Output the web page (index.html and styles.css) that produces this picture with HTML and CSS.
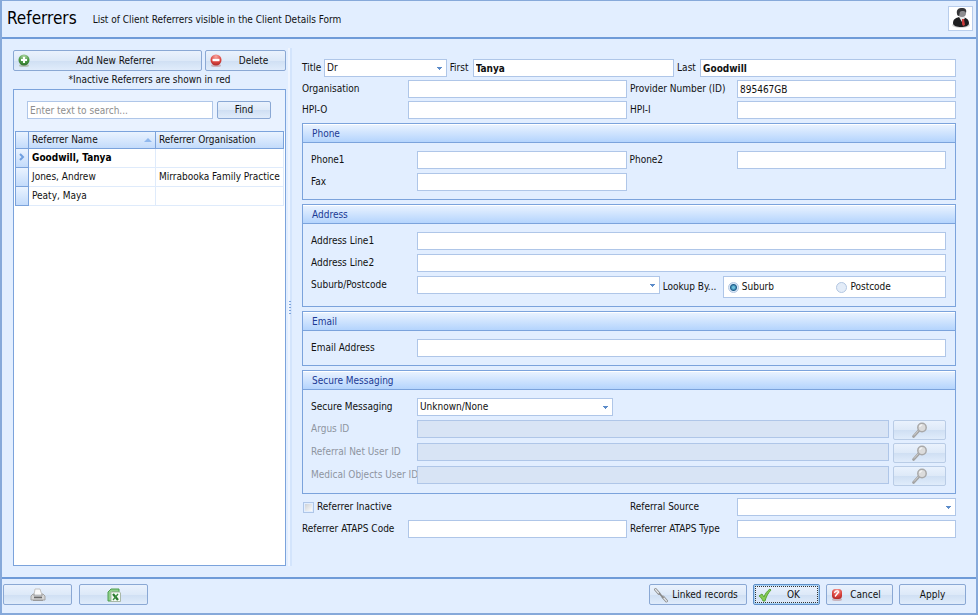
FILE: index.html
```html
<!DOCTYPE html>
<html lang="en">
<head>
    <meta charset="UTF-8">
    <meta name="viewport" content="width=device-width, initial-scale=1.0">
    <title>Referrers</title>
    <link rel="stylesheet" href="styles.css">
</head>
<body>
    <svg class="sprite" aria-hidden="true">
        <defs>
            <radialGradient id="greenBall" cx="50%" cy="20%" r="80%">
                <stop offset="0" stop-color="#b4d8a8"/>
                <stop offset="0.6" stop-color="#4c9a45"/>
                <stop offset="1" stop-color="#2f6f2c"/>
            </radialGradient>
            <radialGradient id="redBall" cx="50%" cy="20%" r="80%">
                <stop offset="0" stop-color="#f7a8a2"/>
                <stop offset="0.6" stop-color="#dd4640"/>
                <stop offset="1" stop-color="#b02a28"/>
            </radialGradient>
        </defs>
        <symbol id="magnifier" viewBox="0 0 16 16">
            <path d="M1.500 14.500L7 8.500" stroke="#a3a3a3" stroke-width="2.600" stroke-linecap="round"/>
            <path d="M2 13.500L7 8" stroke="#cfcfcf" stroke-width="1"/>
            <circle cx="10" cy="5.500" r="4.200" fill="#dcdcdc" stroke="#a9a9a9" stroke-width="1.500"/>
            <path d="M7.800 5a2.400 2.400 0 0 1 2.400-2.200" fill="none" stroke="#f4f4f4" stroke-width="1.200"/>
        </symbol>
    </svg>

    <header class="header">
        <h1>Referrers</h1>
        <p>List of Client Referrers visible in the Client Details Form</p>
        <div class="avatar">
            <svg width="20" height="22" viewBox="0 0 20 22">
                <ellipse cx="10" cy="18" rx="9" ry="3" fill="#d5d5d5"/>
                <path d="M2 16c0-4 3-5 6-6l4 0c4 1 6 3 6 6 0 3-4 4-8 4s-8-1-8-4z" fill="#1d1d1f"/>
                <path d="M8 10l3 5 3-4-1-2H8z" fill="#e9e9e9"/>
                <path d="M11 12l2 0 1 6-2 1-1-2z" fill="#c93a3a"/>
                <circle cx="11" cy="6" r="4" fill="#8d8d90"/>
                <path d="M6 7c-1-5 2-6 5-6 3 0 5 1 4 5-1-2-2-2-4-2-3 0-2 3-3 5-1 0-2-1-2-2z" fill="#353538"/>
            </svg>
        </div>
    </header>

    <main class="main-content">
        <section class="list-panel">
            <div class="list-buttons">
                <button type="button" class="btn btn-add">
                    <svg width="12" height="13" viewBox="0 0 12 13">
                        <ellipse cx="6" cy="11.500" rx="5" ry="1.500" fill="#b4c2b8"/>
                        <circle cx="6" cy="6" r="5.500" fill="url(#greenBall)"/>
                        <path d="M6 3v6M3 6h6" stroke="#fff" stroke-width="2"/>
                    </svg>
                    <span>Add New Referrer</span>
                </button>
                <button type="button" class="btn btn-delete">
                    <svg width="12" height="13" viewBox="0 0 12 13">
                        <ellipse cx="6" cy="11.500" rx="5" ry="1.500" fill="#c9b4bd"/>
                        <circle cx="6" cy="6" r="5.500" fill="url(#redBall)"/>
                        <path d="M2.500 6h7" stroke="#fff" stroke-width="2.400"/>
                    </svg>
                    <span>Delete</span>
                </button>
            </div>
            <p class="note">*Inactive Referrers are shown in red</p>

            <div class="grid-panel">
                <div class="search">
                    <input type="text" placeholder="Enter text to search..." aria-label="Search">
                    <button type="button" class="btn btn-find">Find</button>
                </div>
                <table>
                    <thead>
                        <tr>
                            <th class="marker"></th>
                            <th class="name">Referrer Name <svg width="8" height="4" viewBox="0 0 8 4"><path d="M0 4L4 0l4 4z" fill="#8fb8ee"/></svg></th>
                            <th>Referrer Organisation</th>
                        </tr>
                    </thead>
                    <tbody>
                        <tr class="selected">
                            <td class="marker"><svg width="6" height="8" viewBox="0 0 6 8"><path d="M1 1l3 3-3 3" fill="none" stroke="#6f9fe0" stroke-width="2"/></svg></td>
                            <td>Goodwill, Tanya</td>
                            <td></td>
                        </tr>
                        <tr>
                            <td class="marker"></td>
                            <td>Jones, Andrew</td>
                            <td>Mirrabooka Family Practice</td>
                        </tr>
                        <tr>
                            <td class="marker"></td>
                            <td>Peaty, Maya</td>
                            <td></td>
                        </tr>
                    </tbody>
                </table>
            </div>
        </section>

        <div class="splitter">
            <i></i><i></i><i></i><i></i><i></i>
        </div>

        <form class="details" id="detailsForm">
            <div class="person">
                <div class="name-row">
                    <label for="title">Title</label>
                    <select id="title" class="w-title"><option>Dr</option></select>
                    <label for="first">First</label>
                    <input type="text" id="first" class="w-first" value="Tanya">
                    <label for="last">Last</label>
                    <input type="text" id="last" class="w-last" value="Goodwill">
                </div>
                <div class="fields">
                    <label for="organisation">Organisation</label>
                    <input type="text" id="organisation">
                    <label for="provider" class="second">Provider Number (ID)</label>
                    <input type="text" id="provider" value="895467GB">
                    <label for="hpio">HPI-O</label>
                    <input type="text" id="hpio">
                    <label for="hpii" class="second">HPI-I</label>
                    <input type="text" id="hpii">
                </div>
            </div>

            <section class="group">
                <h2>Phone</h2>
                <div class="group-body fields">
                    <label for="phone1">Phone1</label>
                    <input type="text" id="phone1">
                    <label for="phone2" class="second">Phone2</label>
                    <input type="text" id="phone2">
                    <label for="fax">Fax</label>
                    <input type="text" id="fax">
                </div>
            </section>

            <section class="group">
                <h2>Address</h2>
                <div class="group-body fields">
                    <label for="line1">Address Line1</label>
                    <input type="text" id="line1" class="wide">
                    <label for="line2">Address Line2</label>
                    <input type="text" id="line2" class="wide">
                    <label for="suburb">Suburb/Postcode</label>
                    <div class="wide lookup">
                        <select id="suburb"><option></option></select>
                        <span id="lookupLabel">Lookup By...</span>
                        <div class="radios" role="radiogroup" aria-labelledby="lookupLabel">
                            <label><input type="radio" name="lookup" checked>Suburb</label>
                            <label><input type="radio" name="lookup">Postcode</label>
                        </div>
                    </div>
                </div>
            </section>

            <section class="group">
                <h2>Email</h2>
                <div class="group-body fields">
                    <label for="email">Email Address</label>
                    <input type="text" id="email" class="wide">
                </div>
            </section>

            <section class="group">
                <h2>Secure Messaging</h2>
                <div class="group-body fields">
                    <label for="secure">Secure Messaging</label>
                    <select id="secure" class="wide w-secure"><option>Unknown/None</option></select>
                    <label for="argus" class="off">Argus ID</label>
                    <div class="wide id-row">
                        <input type="text" id="argus" disabled>
                        <button type="button" class="btn" disabled aria-label="Find Argus ID"><svg width="16" height="16"><use href="#magnifier"/></svg></button>
                    </div>
                    <label for="refnet" class="off">Referral Net User ID</label>
                    <div class="wide id-row">
                        <input type="text" id="refnet" disabled>
                        <button type="button" class="btn" disabled aria-label="Find Referral Net User ID"><svg width="16" height="16"><use href="#magnifier"/></svg></button>
                    </div>
                    <label for="medobj" class="off">Medical Objects User ID</label>
                    <div class="wide id-row">
                        <input type="text" id="medobj" disabled>
                        <button type="button" class="btn" disabled aria-label="Find Medical Objects User ID"><svg width="16" height="16"><use href="#magnifier"/></svg></button>
                    </div>
                </div>
            </section>

            <div class="fields">
                <label class="check"><input type="checkbox">Referrer Inactive</label>
                <label for="source" class="second">Referral Source</label>
                <select id="source"><option></option></select>
                <label for="atapsCode">Referrer ATAPS Code</label>
                <input type="text" id="atapsCode">
                <label for="atapsType" class="second">Referrer ATAPS Type</label>
                <input type="text" id="atapsType">
            </div>
        </form>
    </main>

    <footer class="footer">
        <button type="button" class="btn btn-tool" aria-label="Print">
            <svg width="16" height="14" viewBox="0 0 16 14">
                <path d="M5 1h5l2 6H4z" fill="#fafafa" stroke="#c3c3c3"/>
                <path d="M1 8l2-2h1v2h8V6h1l2 2v4H1z" fill="#d6d6d6" stroke="#a3a3a3"/>
                <path d="M4 9.500h8" stroke="#6a6a6a" stroke-width="1.500"/>
                <path d="M3 12h10v1H3z" fill="#9a9a9a"/>
            </svg>
        </button>
        <button type="button" class="btn btn-tool" aria-label="Export to Excel">
            <svg width="14" height="14" viewBox="0 0 14 14">
                <path d="M1 13V4l3-3h8v3H5v9z" fill="#8fcf8a" stroke="#4f9e50"/>
                <path d="M4 4h8.500l1 1v8.500H4z" fill="#f6fbf5" stroke="#a9b8a8"/>
                <path d="M6 6l5 6" stroke="#2c7a30" stroke-width="2.200"/>
                <path d="M11 6l-5 6" stroke="#3b8d3f" stroke-width="1.300"/>
            </svg>
        </button>
        <div class="spacer"></div>
        <button type="button" class="btn btn-linked">
            <svg width="14" height="16" viewBox="0 0 14 16">
                <path d="M1.500 2.500l3.500 4M9 10l3.500 4" stroke="#8b8b8b" stroke-width="2.800" stroke-linecap="round"/>
                <path d="M1.500 2.500l3.500 4M9 10l3.500 4" stroke="#e3e7ec" stroke-width="1.200" stroke-linecap="round"/>
                <path d="M5 6l4.500 5" stroke="#8a8a8a" stroke-width="1.800"/>
            </svg>
            <span>Linked records</span>
        </button>
        <button type="submit" form="detailsForm" class="btn btn-ok">
            <svg width="14" height="14" viewBox="0 0 14 14">
                <path d="M1 8l3-2 2 3c1-3 3-6 6-8l1 1c-3 3-5 7-6 11H5C4 11 3 9 1 8z" fill="#86cc55" stroke="#5aa339"/>
            </svg>
            <span>OK</span>
        </button>
        <button type="button" class="btn btn-cancel">
            <svg width="12" height="13" viewBox="0 0 12 13">
                <ellipse cx="6" cy="11.500" rx="5" ry="1.500" fill="#c9b4bd"/>
                <rect x="1" y="1" width="10" height="10" rx="3.500" fill="url(#redBall)"/>
                <path d="M4 8.500l4-5M3.500 5a3 2.500 0 0 1 4-2" fill="none" stroke="#fff" stroke-width="1.300"/>
            </svg>
            <span>Cancel</span>
        </button>
        <button type="button" class="btn btn-apply">Apply</button>
    </footer>
</body>
</html>
```
FILE: styles.css
```css
* {
    box-sizing: border-box;
}
body {
    margin: 0;
    min-height: 100vh;
    display: flex;
    flex-direction: column;
    font-family: "DejaVu Sans Condensed", "DejaVu Sans", sans-serif;
    font-size: 10px;
    line-height: 14px;
    color: #111;
    background: #e2eeff;
    border: 2px solid #86a9da;
    border-top-width: 1px;
}
.sprite {
    position: absolute;
    width: 0;
    height: 0;
}
h1, h2, p {
    margin: 0;
    font-weight: normal;
}

/* header */
.header {
    position: relative;
    display: flex;
    align-items: center;
    gap: 16px;
    height: 38px;
    padding: 0 3px 2px 5px;
    border-bottom: 2px solid #6f9bd8;
}
/* active tab edge over the window border */
.header::before {
    content: "";
    position: absolute;
    top: -1px;
    left: 111px;
    width: 102px;
    height: 1px;
    background: #e2eeff;
}
.header h1 {
    font-size: 17px;
    line-height: 20px;
    color: #000;
}
.header p {
    padding-top: 4px;
}
.avatar {
    display: flex;
    align-items: center;
    justify-content: center;
    width: 25px;
    height: 25px;
    margin-left: auto;
    background: #fff;
    border: 1px solid #b8cdec;
}

/* buttons */
.btn {
    display: flex;
    align-items: center;
    justify-content: center;
    height: 21px;
    padding: 0 4px;
    font: inherit;
    color: inherit;
    white-space: nowrap;
    background: linear-gradient(#eaf2fd, #dde9f8 50%, #cfdff3 51%, #e0ecfb);
    border: 1px solid #8aa8d4;
    border-radius: 2px;
}
.btn span {
    flex: 1;
    text-align: center;
}
.btn svg {
    flex: none;
}
.btn:disabled {
    border-color: #b9cce6;
}

/* inputs */
input[type="text"], select {
    width: 100%;
    min-width: 0;
    height: 18px;
    margin: 0;
    padding: 0 2px;
    font: inherit;
    color: inherit;
    background: #fff;
    border: 1px solid #afc6e8;
    border-radius: 0;
}
select {
    appearance: none;
    background-image: linear-gradient(#5b8bc9, #5b8bc9), linear-gradient(#5b8bc9, #5b8bc9), linear-gradient(#5b8bc9, #5b8bc9);
    background-repeat: no-repeat;
    background-position: right 4px top 7px, right 5px top 8px, right 6px top 9px;
    background-size: 5px 1px, 3px 1px, 1px 1px;
}
input[type="text"]:disabled {
    background: #d8e4f5;
}
input::placeholder {
    color: #8e8e8e;
    opacity: 1;
}

.main-content {
    flex: 1;
    display: flex;
    padding: 11px 20px 11px 11px;
}

/* list of referrers */
.list-panel {
    display: flex;
    flex-direction: column;
    width: 273px;
}
.list-buttons {
    display: flex;
    gap: 3px;
}
.btn-add {
    flex: 1;
}
.btn-delete {
    width: 81px;
}
.btn-add span, .btn-delete span {
    padding-left: 4px;
}
.note {
    padding: 2px 0;
    text-align: center;
}
.grid-panel {
    flex: 1;
    padding: 11px 1px 0;
    background: linear-gradient(#e9f2ff, #e9f2ff) no-repeat top / 100% 42px #fff;
    border: 1px solid #7ba3dc;
}
.search {
    display: flex;
    gap: 4px;
    margin: 0 13px 12px 12px;
}
.btn-find {
    width: 54px;
    height: 18px;
    flex: none;
}
table {
    width: 100%;
    table-layout: fixed;
    border-collapse: separate;
    border-spacing: 0;
}
th, td {
    height: 19px;
    padding: 0 3px;
    text-align: left;
    font-weight: normal;
    white-space: nowrap;
    border-right: 1px solid #dfebfb;
    border-bottom: 1px solid #dfebfb;
}
th {
    height: 18px;
    background: linear-gradient(#eaf3ff, #c3dbfb);
    border-right-color: #7ba3dc;
    border-bottom-color: #7ba3dc;
    border-top: 1px solid #7ba3dc;
}
th.name {
    width: 127px;
}
th svg {
    float: right;
    margin-top: 5px;
}
.marker {
    width: 14px;
    padding: 0;
    text-align: center;
    border-left: 1px solid #7ba3dc;
}
td.marker {
    background: linear-gradient(#eaf3ff, #c3dbfb);
    border-right-color: #7ba3dc;
    border-bottom-color: #7ba3dc;
}
.selected td {
    font-weight: bold;
    color: #000;
}

/* splitter */
.splitter {
    display: flex;
    flex-direction: column;
    align-items: center;
    justify-content: center;
    gap: 2px;
    width: 4px;
    margin: -2px 10px 0 2px;
    background: linear-gradient(90deg, #eff5ff 50%, #d3e4fc 50%);
}
.splitter i {
    width: 2px;
    height: 1px;
    background: #7ba3dc;
}

/* details form */
.details {
    flex: 1;
    display: flex;
    flex-direction: column;
    gap: 4px;
    margin-top: 9px;
}
.person {
    display: flex;
    flex-direction: column;
    gap: 3px;
}
.name-row {
    display: flex;
    align-items: center;
}
.name-row label {
    flex: none;
    width: 26px;
    padding-left: 3px;
}
.name-row label:first-child {
    width: 22px;
    padding-left: 0;
}
.name-row .w-title {
    flex: 120 1 0;
}
.name-row .w-first {
    flex: 201 1 0;
    font-weight: bold;
}
.name-row .w-last {
    flex: 257 1 0;
    font-weight: bold;
}
.fields {
    display: grid;
    grid-template-columns: 106px 1fr 110px 1fr;
    row-gap: 4px;
}
.person .fields {
    row-gap: 3px;
}
.fields label {
    line-height: 18px;
    white-space: nowrap;
}
.fields .second {
    padding-left: 3px;
}
.wide {
    grid-column: 2 / -1;
}
.group {
    border: 1px solid #7ba3dc;
}
.group h2 {
    height: 19px;
    padding-left: 9px;
    font-size: 10px;
    line-height: 18px;
    color: #1c3a94;
    background: linear-gradient(#e8f2ff, #b4d4fd);
    border-top: 1px solid #fff;
    border-bottom: 1px solid #7ba3dc;
}
.group-body {
    padding: 8px 9px 8px 8px;
}
.lookup {
    display: flex;
    gap: 3px;
}
.lookup select {
    flex: 242 1 0;
}
.lookup span {
    width: 57px;
    line-height: 22px;
    white-space: nowrap;
}
.radios {
    flex: 222 1 0;
    display: flex;
    align-items: center;
    height: 22px;
    padding-left: 4px;
    background: #fff;
    border: 1px solid #afc6e8;
}
.radios label {
    display: flex;
    align-items: center;
    gap: 3px;
    flex: 1;
}
.radios input {
    appearance: none;
    width: 11px;
    height: 11px;
    margin: 0;
    border: 1px solid #b3c7e2;
    border-radius: 50%;
    background: #e3ecf8;
}
.radios input:checked {
    background: radial-gradient(circle, #6cc0dc 1px, #1f5f8c 3px, #dbe8f7 4px);
}
.w-secure {
    width: 196px;
}
.off {
    color: #8e959f;
}
.id-row {
    display: flex;
    gap: 4px;
    height: 19px;
}
.id-row .btn {
    flex: none;
    width: 53px;
    height: 20px;
}
.fields .check {
    grid-column: 1 / 3;
    display: flex;
    align-items: center;
    gap: 3px;
}
.check input {
    appearance: none;
    width: 11px;
    height: 11px;
    margin: 0 0 0 1px;
    padding: 1px;
    background: linear-gradient(135deg, #cfd3d8, #fafafa) content-box #fff;
    border: 1px solid #afc6e8;
}

/* footer */
.footer {
    display: flex;
    align-items: flex-start;
    gap: 6px;
    height: 36px;
    padding: 5px 10px 0 1px;
    border-top: 2px solid #6f9bd8;
}
.btn-tool {
    width: 69px;
    margin-right: 1px;
}
.spacer {
    flex: 1;
}
.btn-linked {
    width: 98px;
}
.btn-ok {
    width: 67px;
    border-color: #5f8fc9;
    box-shadow: inset 0 0 0 1px #a9d3f5;
    outline: 1px dotted #333;
    outline-offset: -3px;
}
.btn-cancel, .btn-apply {
    width: 67px;
}
```
